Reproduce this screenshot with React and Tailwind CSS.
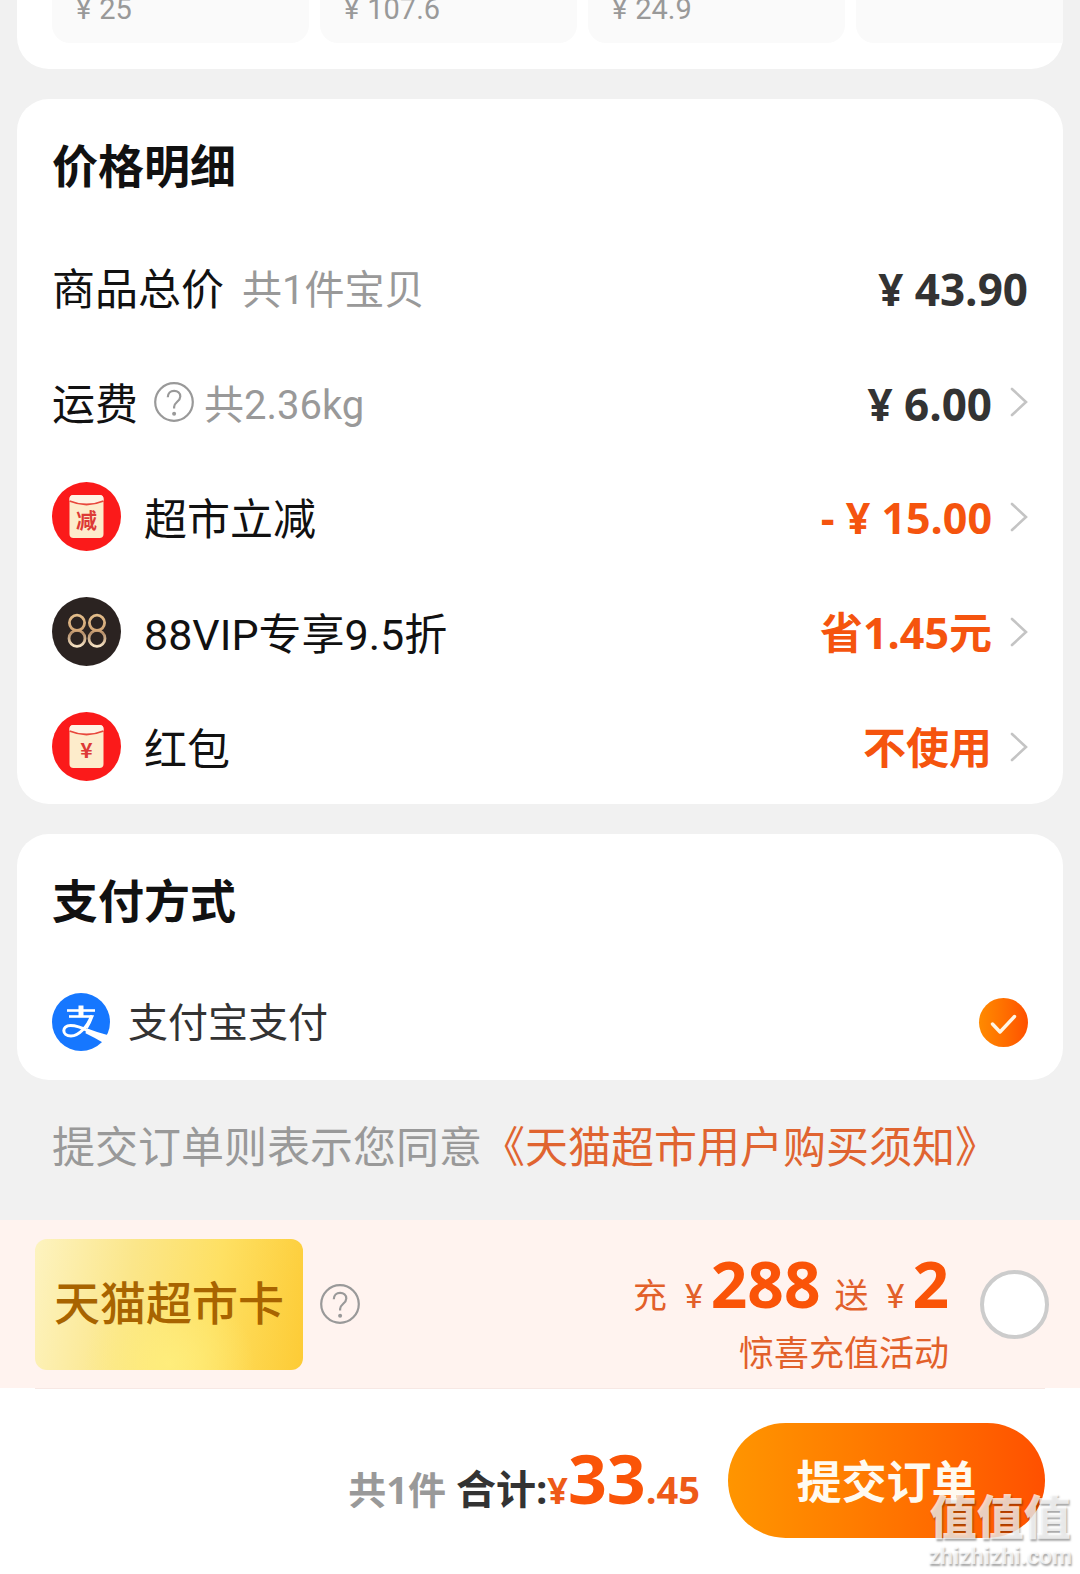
import { useState } from "react";

const RECOMMENDED = [
  { id: 1, price: "25" },
  { id: 2, price: "107.6" },
  { id: 3, price: "24.9" },
  { id: 4, price: "" },
];

const DISCOUNTS = [
  { id: "cut", icon: <PacketIcon text="减" />, name: "超市立减", value: "- ¥ 15.00" },
  { id: "vip", icon: <VipIcon />, name: "88VIP专享9.5折", value: "省1.45元" },
  { id: "packet", icon: <PacketIcon text="¥" />, name: "红包", value: "不使用" },
];

function PacketIcon({ text }) {
  return (
    <svg viewBox="0 0 69 69" className="size-[69px] shrink-0" aria-hidden="true">
      <circle cx="34.5" cy="34.5" r="34.5" fill="#fb1a1a" />
      <rect x="17.500" y="13" width="34" height="43" rx="4" fill="#fdeccb" />
      <path d="M17.500 19v-2a4 4 0 0 1 4-4h26a4 4 0 0 1 4 4v2q-17 7-34 0z" fill="#fff3e4" />
      <path d="M17.500 19q17 7 34 0" fill="none" stroke="#e8483c" strokeWidth="1.800" />
      <text
        x="34.5"
        y="46"
        textAnchor="middle"
        fontSize="21"
        fontWeight="700"
        fill="#dd3a36"
        fontFamily="'Noto Sans CJK SC', sans-serif"
      >
        {text}
      </text>
    </svg>
  );
}

function VipIcon() {
  return (
    <svg viewBox="0 0 69 69" className="size-[69px] shrink-0" aria-hidden="true">
      <defs>
        <linearGradient id="vipGold" gradientUnits="userSpaceOnUse" x1="0" y1="17" x2="0" y2="50">
          <stop offset="0" stopColor="#e3bd8a" />
          <stop offset="0.500" stopColor="#d2a677" />
          <stop offset="0.580" stopColor="#b38d69" />
          <stop offset="1" stopColor="#f8e6c8" />
        </linearGradient>
      </defs>
      <circle cx="34.5" cy="34.5" r="34.5" fill="#2b2321" />
      <g fill="none" stroke="url(#vipGold)" strokeWidth="2.800">
        <circle cx="25" cy="25.800" r="7.600" />
        <circle cx="25" cy="41.400" r="8" />
        <circle cx="45" cy="25.800" r="7.600" />
        <circle cx="45" cy="41.400" r="8" />
      </g>
    </svg>
  );
}

function AlipayIcon() {
  return (
    <svg viewBox="0 0 58 58" className="size-[58px] shrink-0" aria-hidden="true">
      <circle cx="29" cy="29" r="29" fill="#1677ff" />
      <g fill="none" stroke="#ffffff" strokeWidth="2.600">
        <path d="M15 17.500h28" />
        <path d="M17 23.500h23" />
        <path d="M29 12.500v11" strokeWidth="5" />
        <path d="M39.500 22.500C36.500 32.500 27 43 19 43c-9.500 0-9.500-10.500-.5-10.500 8 0 14 3.500 20 6.500" strokeWidth="3" />
      </g>
      <path d="M34.500 35.200q11 4.300 24 7.600l-6 7.700q-9-5.500-19-10.300z" fill="#ffffff" />
      <path d="M39 22.200h3q-2.500 7.500-6.300 13.500l-3.200-1.700q4-5.500 6.500-11.800z" fill="#ffffff" />
    </svg>
  );
}

function HelpButton({ label }) {
  return (
    <button type="button" aria-label={label} className="shrink-0 cursor-pointer">
      <svg viewBox="0 0 40 40" className="size-10" fill="none" stroke="#999999" strokeWidth="2.200">
        <circle cx="20" cy="20" r="18.800" />
        <path d="M13.800 15.200c0-4 2.800-6.400 6.300-6.400s6.200 2.400 6.200 5.700c0 5-6.200 5.500-6.200 10.500v1.500" />
        <circle cx="20.100" cy="31.800" r="2" fill="#999999" stroke="none" />
      </svg>
    </button>
  );
}

function Chevron() {
  return (
    <svg
      viewBox="0 0 18 30"
      className="h-[30px] w-[18px] shrink-0"
      fill="none"
      stroke="#c4c4c4"
      strokeWidth="2.600"
      strokeLinecap="round"
      aria-hidden="true"
    >
      <path d="M2 2l14 13L2 28" />
    </svg>
  );
}

export default function App() {
  const [method, setMethod] = useState("alipay");
  const [topUp, setTopUp] = useState(false);

  return (
    <div className="flex min-h-screen flex-col overflow-x-hidden bg-[#f1f1f1] font-[Roboto,'Noto_Sans_CJK_SC',sans-serif] text-[#111111]">
      <main className="flex flex-1 flex-col gap-[30px] px-[17px] pb-[39px]">
        {/* Recommended goods */}
        <section className="-mt-[5px] overflow-hidden rounded-b-[32px] bg-white pb-[26px] pl-[35px]">
          <ul className="flex gap-[11px]">
            {RECOMMENDED.map((item) => (
              <li
                key={item.id}
                className="flex h-12 w-[257px] shrink-0 gap-2 rounded-b-[18px] bg-[#fafafa] px-6 text-[29px] leading-7 text-[#999999]"
              >
                {item.price && <span>¥</span>}
                <span>{item.price}</span>
              </li>
            ))}
          </ul>
        </section>

        {/* Price detail */}
        <section className="rounded-[32px] bg-white px-[35px] pt-[38px] pb-[23px]">
          <h2 className="text-[46px] leading-[60px] font-bold">价格明细</h2>
          <ul className="mt-[55px] flex flex-col gap-[46px]">
            <li className="flex h-[69px] items-center justify-between">
              <div className="flex items-center gap-[18px] pt-2">
                <span className="text-[43px]">商品总价</span>
                <span className="text-[40px] text-[#999999]">共1件宝贝</span>
              </div>
              <span className="pt-1 font-['Open_Sans','Noto_Sans_CJK_SC',sans-serif] text-[44px] font-bold text-[#333333]">
                ¥ 43.90
              </span>
            </li>
            <li className="flex h-[69px] items-center justify-between">
              <div className="flex items-center">
                <span className="pt-2 text-[43px]">运费</span>
                <span className="ml-4 flex items-center gap-2.5">
                  <HelpButton label="运费说明" />
                  <span className="pt-2 text-[40px] text-[#999999]">共2.36kg</span>
                </span>
              </div>
              <button type="button" className="flex cursor-pointer items-center gap-[18px]">
                <span className="pt-1 font-['Open_Sans','Noto_Sans_CJK_SC',sans-serif] text-[44px] font-bold text-[#333333]">
                  ¥ 6.00
                </span>
                <Chevron />
              </button>
            </li>
            {DISCOUNTS.map((row) => (
              <li key={row.id} className="flex h-[69px] items-center justify-between">
                <div className="flex items-center gap-[23px]">
                  {row.icon}
                  <span className="pt-2 text-[43px]">{row.name}</span>
                </div>
                <button type="button" className="flex cursor-pointer items-center gap-[18px]">
                  <span className="pt-1 font-['Open_Sans','Noto_Sans_CJK_SC',sans-serif] text-[43px] font-bold text-[#f5540e]">
                    {row.value}
                  </span>
                  <Chevron />
                </button>
              </li>
            ))}
          </ul>
        </section>

        {/* Payment method */}
        <section className="rounded-[32px] bg-white px-[35px] pt-[38px] pb-[29px]">
          <h2 className="text-[46px] leading-[60px] font-bold">支付方式</h2>
          <label className="mt-[61px] flex h-[58px] cursor-pointer items-center">
            <AlipayIcon />
            <span className="ml-[18px] pt-1 text-[40px] text-[#333333]">支付宝支付</span>
            <span className="relative ml-auto size-[49px]">
              <input
                type="radio"
                name="method"
                value="alipay"
                checked={method === "alipay"}
                onChange={(e) => setMethod(e.target.value)}
                className="block size-[49px] appearance-none rounded-full bg-gradient-to-r from-[#ff8a00] to-[#ff5000]"
              />
              <svg
                viewBox="0 0 49 49"
                className="pointer-events-none absolute inset-0"
                fill="none"
                stroke="#fff6e6"
                strokeWidth="3.400"
                strokeLinecap="round"
                strokeLinejoin="round"
                aria-hidden="true"
              >
                <path d="M13.500 26l7.500 8 14.500-15.500" />
              </svg>
            </span>
          </label>
        </section>

        <p className="px-[35px] pt-[5px] text-[43px] leading-[66px] text-[#999999]">
          提交订单则表示您同意
          <a href="#notice" className="text-[#e06430]">
            《天猫超市用户购买须知》
          </a>
        </p>
      </main>

      <footer className="relative bg-white">
        {/* Gift card top-up */}
        <div className="flex items-center bg-[#fff3ef] py-[18px] pr-[31px] pl-[35px]">
          <div className="flex h-[131px] w-[268px] items-center justify-center rounded-[12px] bg-[radial-gradient(ellipse_at_50%_95%,#fff07ecc,transparent_45%),linear-gradient(100deg,#fdf3c0,#fbe68a_35%,#fee063_65%,#fdcb35)] text-[46px] font-medium text-[#a86400]">
            天猫超市卡
          </div>
          <div className="ml-[17px] flex">
            <HelpButton label="超市卡说明" />
          </div>
          <label htmlFor="topup" className="ml-auto flex flex-col items-end gap-3.5 pt-4 text-[#e2602a]">
            <span className="flex items-baseline text-[34px] leading-[60px]">
              <span>充</span>
              <span className="ml-[18px]">¥</span>
              <span className="ml-2 font-['Open_Sans',sans-serif] text-[64px] font-bold text-[#fa5408]">288</span>
              <span className="ml-3.5">送</span>
              <span className="ml-[18px]">¥</span>
              <span className="ml-2 font-['Open_Sans',sans-serif] text-[64px] font-bold text-[#fa5408]">2</span>
            </span>
            <span className="text-[35px] leading-[30px]">惊喜充值活动</span>
          </label>
          <input
            id="topup"
            type="checkbox"
            checked={topUp}
            onChange={(e) => setTopUp(e.target.checked)}
            className="ml-[31px] size-[69px] cursor-pointer appearance-none rounded-full border-[4px] border-[#cccccc] bg-white checked:border-[#ff5000] checked:bg-[#ff5000]"
          />
        </div>

        {/* Submit bar */}
        <div className="mx-[35px] flex items-center justify-end border-t border-[#f7e8e4] pt-[34px] pb-9">
          <div className="flex items-baseline pt-2 font-['Open_Sans','Noto_Sans_CJK_SC',sans-serif] leading-[80px] font-bold">
            <span className="text-[38px] text-[#999999]">共1件</span>
            <span className="ml-2.5 text-[40px] text-[#333333]">合计:</span>
            <span className="text-[36px] text-[#ee5a18]">¥</span>
            <span className="text-[68px] text-[#fa5408]">33</span>
            <span className="text-[38px] text-[#ee5a18]">.45</span>
          </div>
          <button
            type="button"
            className="ml-7 h-[115px] w-[317px] cursor-pointer rounded-full bg-gradient-to-r from-[#ff9500] to-[#ff5000] pt-1.5 text-[45px] font-bold text-[#fffaf0]"
          >
            提交订单
          </button>
        </div>

        {/* Watermark */}
        <div className="pointer-events-none absolute right-2 bottom-0 flex flex-col items-center pb-[3px] text-white/75 [text-shadow:1px_2px_2px_rgba(0,0,0,0.35)]">
          <span className="text-[47px] leading-[50px] font-black">值值值</span>
          <span className="text-[23px] leading-[28px] font-bold">zhizhizhi.com</span>
        </div>
      </footer>
    </div>
  );
}
